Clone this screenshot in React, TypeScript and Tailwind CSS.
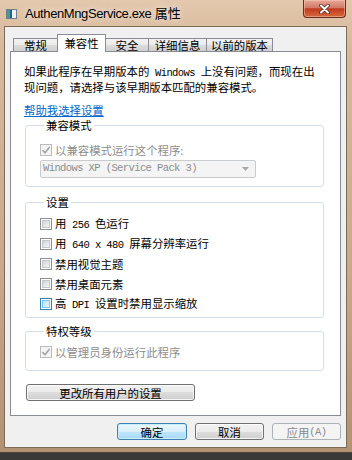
import type { ReactNode } from 'react'

// SimSun-style half-width latin run
function L({ children }: { children: ReactNode }) {
  return (
    <span className="font-['Liberation_Mono',monospace] text-[10.5px] tracking-[-0.6px] whitespace-pre">
      {children}
    </span>
  )
}

function Check({ kind }: { kind: 'off' | 'hot' | 'dis' }) {
  if (kind === 'dis') {
    return (
      <div className="w-[12px] h-[12px] shrink-0 border border-[#bcbcbc] bg-[#f4f4f4] flex items-center justify-center">
        <svg width="10" height="10" viewBox="0 0 10 10">
          <path d="M1.5 5.2 L4 7.8 L8.6 2" fill="none" stroke="#a6a6a6" strokeWidth="1.7" />
        </svg>
      </div>
    )
  }
  return (
    <div
      className={`w-[12px] h-[12px] shrink-0 border bg-white p-[1px] ${
        kind === 'hot' ? 'border-[#3c7fb1]' : 'border-[#8e8f8f]'
      }`}
    >
      <div
        className={`w-full h-full border ${
          kind === 'hot'
            ? 'border-[#79c6f9] bg-[linear-gradient(135deg,#b9e1f8,#e8f5fd)]'
            : 'border-[#c3c6ca] bg-[linear-gradient(135deg,#cfd2d6,#f7f7f7)]'
        }`}
      />
    </div>
  )
}

function Btn({ children, kind = 'normal', className = '' }: { children: ReactNode; kind?: 'normal' | 'default' | 'disabled'; className?: string }) {
  const look =
    kind === 'default'
      ? 'border-[#3c7fb1] text-black bg-[linear-gradient(to_bottom,#eaf6fd_0%,#d9f0fc_50%,#bee6fd_50%,#a7d9f5_100%)] shadow-[inset_0_0_0_1px_#c9ecff]'
      : kind === 'disabled'
        ? 'border-[#adb2b5] text-[#8a8a8a] bg-[#f4f4f4]'
        : 'border-[#707070] text-black bg-[linear-gradient(to_bottom,#f2f2f2_0%,#ebebeb_50%,#dddddd_50%,#cfcfcf_100%)] shadow-[inset_0_0_0_1px_rgba(255,255,255,0.8)]'
  return (
    <div className={`h-[17px] rounded-[3px] border flex items-center justify-center leading-[14px] ${look} ${className}`}>
      {children}
    </div>
  )
}

function Row({ box, children, gray = false }: { box: 'off' | 'hot' | 'dis'; children: ReactNode; gray?: boolean }) {
  return (
    <div className={`h-[20px] flex items-center gap-[3px] whitespace-nowrap leading-[14px] ${gray ? 'text-[#8d8d8d]' : 'text-black'}`}>
      <Check kind={box} />
      <span>{children}</span>
    </div>
  )
}

const tabs = [
  { label: '常规', w: 'w-[45px]' },
  { label: '兼容性', w: 'w-[49px]', active: true },
  { label: '安全', w: 'w-[44px]' },
  { label: '详细信息', w: 'w-[59px]' },
  { label: '以前的版本', w: 'w-[67px]' },
]

export default function App() {
  return (
    <div className="w-[352px] h-[460px] overflow-hidden bg-[#3b3937] font-['Noto_Sans_CJK_SC',sans-serif] text-[11.4px]">
      <div className="h-[453px] flex flex-col pl-[4px] pr-[5px] border-b border-[#4f4236] bg-[linear-gradient(to_bottom,#e3c8ad_0%,#d8b99b_10%,#c9a98a_60%,#b39274_100%)]">
        {/* Title bar */}
        <div className="h-[26px] shrink-0 flex items-center">
          <svg width="11" height="10" viewBox="0 0 11 10" className="ml-[2px] mt-[1px]">
            <rect x="0.5" y="0.5" width="10" height="9" fill="#eef2f6" stroke="#6f7f8f" />
            <rect x="1" y="1" width="3" height="8" fill="#3fa07e" />
            <rect x="4" y="1" width="2" height="8" fill="#2d5d9f" />
          </svg>
          <span className="ml-[8px] font-['Liberation_Sans',sans-serif] text-[13px] tracking-[-0.4px] text-black [text-shadow:0_0_6px_rgba(255,255,255,0.9)]">
            AuthenMngService.exe <span className="font-['Noto_Sans_CJK_SC',sans-serif] tracking-normal">属性</span>
          </span>
          <div className="ml-auto mr-[1px] self-start w-[43px] h-[18px] rounded-b-[4px] border border-t-0 border-[#6d2a1f] flex items-center justify-center bg-[linear-gradient(to_bottom,#e8a898_0%,#d27a66_45%,#c13a1e_52%,#d66a3c_100%)] shadow-[inset_0_0_0_1px_rgba(255,210,190,0.45)]">
            <svg width="13" height="10" viewBox="0 0 13 10">
              <path d="M3 1.5 L10 8.5 M10 1.5 L3 8.5" stroke="#5a2a20" strokeWidth="3.6" strokeLinecap="round" />
              <path d="M3 1.5 L10 8.5 M10 1.5 L3 8.5" stroke="#ffffff" strokeWidth="2" strokeLinecap="round" />
            </svg>
          </div>
        </div>

        {/* Client area */}
        <div className="flex-1 mb-[4px] bg-[#f0f0f0] border border-[#7d6b5a] flex flex-col">
          {/* Tabs */}
          <div className="mt-[7px] -mb-px h-[18px] pl-[8px] flex items-end relative z-10">
            {tabs.map((t, i) => (
              <div
                key={t.label}
                className={`${t.w} ${i > 0 ? '-ml-px' : ''} border border-b-0 border-[#898c95] flex items-center justify-center whitespace-nowrap leading-[14px] ${
                  t.active
                    ? 'h-[18px] bg-white relative z-10 pb-[2px]'
                    : 'h-[13px] mb-[1px] bg-[linear-gradient(to_bottom,#f2f2f2_0%,#ebebeb_50%,#dddddd_50%,#cfcfcf_100%)]'
                }`}
              >
                {t.label}
              </div>
            ))}
          </div>

          {/* Tab panel */}
          <div className="ml-[5px] w-[331px] h-[365px] border border-[#898c95] bg-white px-[14px] pt-[12px] text-black">
            <p className="-ml-[1px] leading-[14px] whitespace-nowrap">
              如果此程序在早期版本的<L> Windows </L>上没有问题，而现在出
              <br />
              现问题，请选择与该早期版本匹配的兼容模式。
            </p>
            <div className="mt-[9px] -ml-[1px] leading-[14px]">
              <span className="text-[#0066cc] underline">帮助我选择设置</span>
            </div>

            <fieldset className="mt-[1px] w-[299px] border border-[#d5dfe5] rounded-[3px] pl-[14px] pb-[8px]">
              <legend className="ml-[4px] px-[2px] leading-[14px]">兼容模式</legend>
              <div className="mt-[11px] h-[14px] flex items-center gap-[3px] text-[#8d8d8d] whitespace-nowrap leading-[14px]">
                <Check kind="dis" />
                <span>以兼容模式运行这个程序:</span>
              </div>
              <div className="mt-[3px] w-[216px] h-[18px] border border-[#c9cccf] rounded-[2px] bg-[#f4f4f4] flex items-center pl-[2px] text-[#8d8d8d]">
                <L>Windows XP (Service Pack 3)</L>
                <svg width="7" height="4" viewBox="0 0 7 4" className="ml-auto mr-[6px]">
                  <path d="M0 0 L7 0 L3.5 4 Z" fill="#a8a8a8" />
                </svg>
              </div>
            </fieldset>

            <fieldset className="mt-[8px] w-[299px] border border-[#d5dfe5] rounded-[3px] pl-[14px] pb-[3px]">
              <legend className="ml-[4px] px-[2px] leading-[14px]">设置</legend>
              <div className="mt-[5px]">
                <Row box="off">
                  用<L> 256 </L>色运行
                </Row>
                <Row box="off">
                  用<L> 640 x 480 </L>屏幕分辨率运行
                </Row>
                <Row box="off">禁用视觉主题</Row>
                <Row box="off">禁用桌面元素</Row>
                <Row box="hot">
                  高<L> DPI </L>设置时禁用显示缩放
                </Row>
              </div>
            </fieldset>

            <fieldset className="mt-[6px] w-[299px] border border-[#d5dfe5] rounded-[3px] pl-[14px] pb-[8px]">
              <legend className="ml-[4px] px-[2px] leading-[14px]">特权等级</legend>
              <div className="mt-[4px]">
                <Row box="dis" gray>
                  以管理员身份运行此程序
                </Row>
              </div>
            </fieldset>

            <Btn className="mt-[13px] ml-[1px] w-[169px]">更改所有用户的设置</Btn>
          </div>

          {/* Dialog buttons */}
          <div className="mt-[7px] ml-[5px] w-[331px] flex justify-end gap-[8px]">
            <Btn kind="default" className="w-[70px]">确定</Btn>
            <Btn className="w-[69px]">取消</Btn>
            <Btn kind="disabled" className="w-[69px]">
              应用<L>(A)</L>
            </Btn>
          </div>
        </div>
      </div>
    </div>
  )
}
